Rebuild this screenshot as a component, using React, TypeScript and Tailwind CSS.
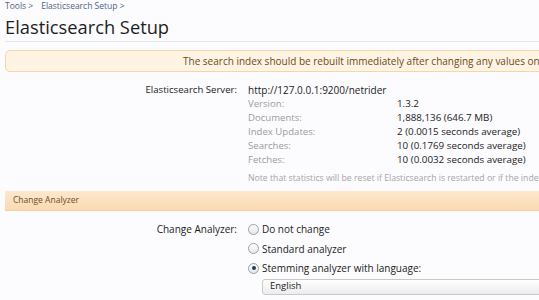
export default function App() {
    const stats: [string, string][] = [
        ["Version:", "1.3.2"],
        ["Documents:", "1,888,136 (646.7 MB)"],
        ["Index Updates:", "2 (0.0015 seconds average)"],
        ["Searches:", "10 (0.1769 seconds average)"],
        ["Fetches:", "10 (0.0032 seconds average)"],
    ];

    const options = ["Do not change", "Standard analyzer", "Stemming analyzer with language:"];

    return (
        <div className="w-[539px] h-[300px] overflow-hidden bg-[#fcfcfe] font-['Open_Sans',sans-serif] text-[#333]">
            <div className="w-[820px] pl-[5px]">
                {/* Breadcrumb */}
                <div className="flex h-[13px] items-center gap-[8px] text-[8.5px] leading-none text-[#4f6285]">
                    <span>Tools &gt;</span>
                    <span>Elasticsearch Setup &gt;</span>
                </div>

                {/* Title */}
                <h1 className="h-[28px] pt-[3px] text-[18.3px] leading-[22px] text-[#1e1e1e]">Elasticsearch Setup</h1>
                <div className="h-px bg-[#dfe7f0]" />

                {/* Notice */}
                <div className="mt-[8px] flex h-[22px] items-center rounded-[5px] border border-[#f3d7a4] bg-[#fff4e3] pl-[177px] text-[10px] text-[#6b4a22]">
                    The search index should be rebuilt immediately after changing any values on this page.
                </div>

                {/* Server info */}
                <div className="mt-[11px] grid grid-cols-[232px_1fr] gap-x-[11px] text-[9.6px]">
                    <div className="h-[14px] text-right leading-[14px] text-[#222]">Elasticsearch Server:</div>
                    <div className="h-[14px] text-[10px] leading-[14px] text-[#222]">http://127.0.0.1:9200/netrider</div>

                    <div />
                    <div>
                        {stats.map(([label, value]) => (
                            <div key={label} className="grid h-[14px] grid-cols-[149px_1fr] leading-[14px]">
                                <span className="text-[#9b9b9b]">{label}</span>
                                <span className="text-[9.8px] text-[#222]">{value}</span>
                            </div>
                        ))}
                        <div className="mt-[4px] h-[14px] whitespace-nowrap text-[8.7px] leading-[14px] text-[#a5a5a5]">
                            Note that statistics will be reset if Elasticsearch is restarted or if the index is rebuilt.
                        </div>
                    </div>
                </div>

                {/* Section header */}
                <div className="mt-[6px] flex h-[20px] items-center border-b border-[#f1cf9f] bg-gradient-to-b from-[#fde8cc] to-[#f9dab2] pl-[8px] text-[8.5px] text-[#6e4c2a]">
                    Change Analyzer
                </div>

                {/* Analyzer options */}
                <div className="mt-[11px] grid grid-cols-[232px_1fr] gap-x-[11px] text-[10px]">
                    <div className="h-[14px] text-right leading-[14px] text-[#222]">Change Analyzer:</div>
                    <div className="flex flex-col gap-[5.5px]">
                        {options.map((opt, i) => (
                            <label key={opt} className="flex h-[14px] items-center gap-[3px] leading-[14px] text-[#222]">
                                <span className="flex h-[11px] w-[11px] items-center justify-center rounded-full border border-[#9aa0a8] bg-gradient-to-b from-[#ffffff] to-[#e4e6ea]">
                                    {i === 2 && <span className="h-[4px] w-[4px] rounded-full bg-[#2b3a4f]" />}
                                </span>
                                {opt}
                            </label>
                        ))}
                        <div className="ml-[14px] mt-[-2px] flex h-[16px] w-[400px] items-center rounded-[3px] border border-[#c9c9c9] bg-gradient-to-b from-[#ffffff] to-[#ececec] pl-[7px] text-[9.5px] text-[#222]">
                            English
                        </div>
                    </div>
                </div>
            </div>
        </div>
    );
}
